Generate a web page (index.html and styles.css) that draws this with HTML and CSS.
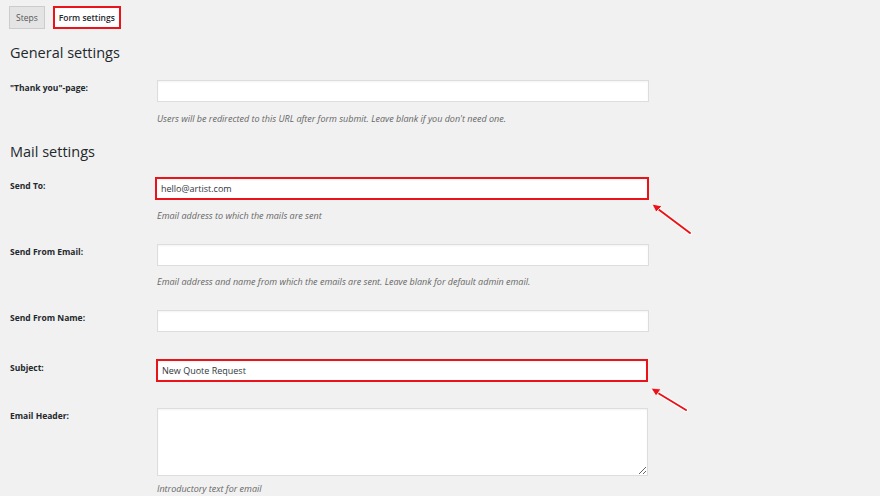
FILE: index.html
```html
<!DOCTYPE html>
<html lang="en">
<head>
    <meta charset="UTF-8">
    <title>Form settings</title>
    <link rel="stylesheet" href="styles.css">
</head>
<body>
    <!-- tabs -->
    <div class="tabs">
        <a class="tab">Steps</a>
        <a class="tab active">Form settings</a>
    </div>

    <div class="page">
        <h2 class="section-title">General settings</h2>

        <div class="row before-heading">
            <label class="row-label">"Thank you"-page:</label>
            <div class="row-field">
                <input class="text-input" type="text">
                <p class="desc first">Users will be redirected to this URL after form submit. Leave blank if you don't need one.</p>
            </div>
        </div>

        <h2 class="section-title mail">Mail settings</h2>

        <div class="row">
            <label class="row-label">Send To:</label>
            <div class="row-field">
                <input class="text-input highlight" type="text" value="hello@artist.com">
                <p class="desc">Email address to which the mails are sent</p>
            </div>
        </div>

        <div class="row">
            <label class="row-label">Send From Email:</label>
            <div class="row-field">
                <input class="text-input" type="text">
                <p class="desc">Email address and name from which the emails are sent. Leave blank for default admin email.</p>
            </div>
        </div>

        <div class="row no-desc">
            <label class="row-label">Send From Name:</label>
            <div class="row-field">
                <input class="text-input" type="text">
            </div>
        </div>

        <div class="row no-desc short">
            <label class="row-label">Subject:</label>
            <div class="row-field">
                <input class="text-input highlight subject" type="text" value="New Quote Request">
            </div>
        </div>

        <div class="row">
            <label class="row-label">Email Header:</label>
            <div class="row-field">
                <textarea class="text-area"></textarea>
                <p class="desc last">Introductory text for email</p>
            </div>
        </div>
    </div>

    <!-- annotation arrows -->
    <svg class="arrow arrow-one" width="50" height="40" viewBox="0 0 50 40">
        <g stroke-linecap="round">
            <line x1="4" y1="4" x2="40" y2="31" stroke="#fff" stroke-width="4"/>
            <line x1="4" y1="4" x2="40" y2="31" stroke="#e8141a" stroke-width="2"/>
        </g>
        <polygon points="2,2 12,4 6,10" fill="#e8141a" stroke="#fff" stroke-width="0.8"/>
    </svg>
    <svg class="arrow arrow-two" width="50" height="34" viewBox="0 0 50 34">
        <g stroke-linecap="round">
            <line x1="4" y1="4" x2="37" y2="24" stroke="#fff" stroke-width="4"/>
            <line x1="4" y1="4" x2="37" y2="24" stroke="#e8141a" stroke-width="2"/>
        </g>
        <polygon points="2,2 12,3 7,10" fill="#e8141a" stroke="#fff" stroke-width="0.8"/>
    </svg>
</body>
</html>
```

FILE: styles.css
```css
* {
    margin: 0;
    padding: 0;
    box-sizing: border-box;
}

body {
    font-family: "Open Sans", "Noto Sans", sans-serif;
    background: #f1f1f1;
    color: #23282d;
    width: 880px;
    height: 496px;
    overflow: hidden;
    position: relative;
}

.tabs {
    display: flex;
    gap: 8px;
    padding: 6px 0 0 9px;
}

.tab {
    height: 23px;
    padding: 0 6px;
    display: flex;
    align-items: center;
    font-size: 8.5px;
    color: #555;
    background: #e4e4e4;
    border: 1px solid #ccc;
}

.tab.active {
    background: #fff;
    color: #23282d;
    font-weight: 600;
    border: 2px solid #e8141a;
    padding: 0 4px;
}

.page {
    padding: 0 10px;
}

.section-title {
    font-size: 14.5px;
    font-weight: 400;
    line-height: 20px;
    color: #23282d;
    margin: 14px 0 17px;
}

.section-title.mail {
    margin: 17px 0 16px;
}

.row {
    display: grid;
    grid-template-columns: 147px 492px;
    margin-bottom: 22px;
}

.row.before-heading {
    margin-bottom: 0;
}

.row.no-desc {
    margin-bottom: 28px;
}

.row.short {
    margin-bottom: 26px;
}

.row-label {
    font-size: 8.5px;
    font-weight: 700;
    color: #23282d;
    padding-top: 2px;
    line-height: 12px;
}

.text-input {
    display: block;
    width: 492px;
    height: 22px;
    background: #fff;
    border: 1px solid #ddd;
    box-shadow: inset 0 1px 2px rgba(0,0,0,0.05);
    font-family: "Open Sans", sans-serif;
    font-size: 9px;
    color: #32373c;
    padding: 0 4px;
    outline: none;
}

.text-input.highlight {
    border: 2px solid #e8141a;
    width: 494px;
    height: 23px;
    margin: -1px 0 0 -2px;
    padding: 0 4px;
}

.text-input.subject {
    width: 492px;
    margin-left: -1px;
}

.text-area {
    display: block;
    width: 491px;
    height: 68px;
    background: #fff;
    border: 1px solid #ddd;
    box-shadow: inset 0 1px 2px rgba(0,0,0,0.05);
    resize: vertical;
    outline: none;
}

.desc {
    font-size: 9px;
    font-style: italic;
    color: #666;
    line-height: 12px;
    margin-top: 10px;
}

.desc.first {
    margin-top: 11px;
}

.desc.last {
    margin-top: 7px;
}

.arrow {
    position: absolute;
}

.arrow-one {
    left: 650px;
    top: 202px;
}

.arrow-two {
    left: 649px;
    top: 386px;
}
```
